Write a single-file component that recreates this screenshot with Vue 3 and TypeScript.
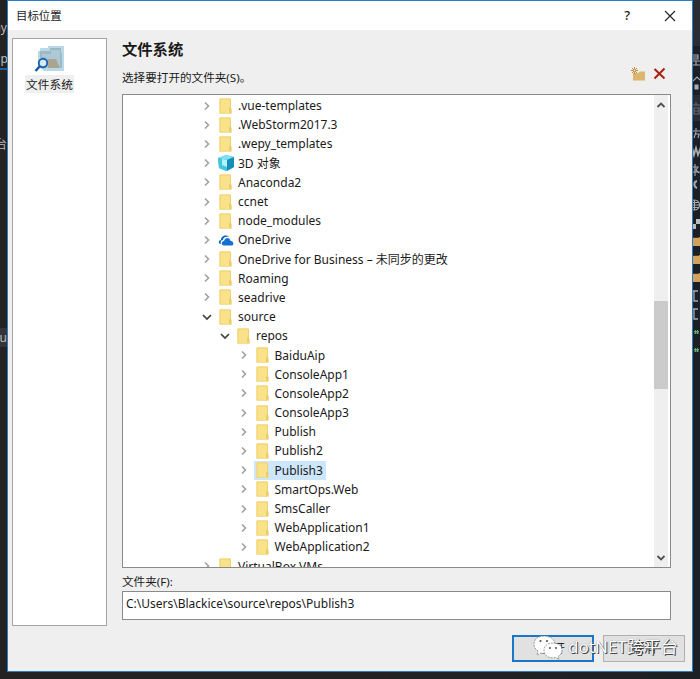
<script setup lang="ts">
interface TreeNode {
  name: string
  level: number
  kind?: 'folder' | 'cube' | 'cloud'
  open?: boolean
  selected?: boolean
}

const nodes: TreeNode[] = [
  { name: '.vue-templates', level: 0 },
  { name: '.WebStorm2017.3', level: 0 },
  { name: '.wepy_templates', level: 0 },
  { name: '3D 对象', level: 0, kind: 'cube' },
  { name: 'Anaconda2', level: 0 },
  { name: 'ccnet', level: 0 },
  { name: 'node_modules', level: 0 },
  { name: 'OneDrive', level: 0, kind: 'cloud' },
  { name: 'OneDrive for Business – 未同步的更改', level: 0 },
  { name: 'Roaming', level: 0 },
  { name: 'seadrive', level: 0 },
  { name: 'source', level: 0, open: true },
  { name: 'repos', level: 1, open: true },
  { name: 'BaiduAip', level: 2 },
  { name: 'ConsoleApp1', level: 2 },
  { name: 'ConsoleApp2', level: 2 },
  { name: 'ConsoleApp3', level: 2 },
  { name: 'Publish', level: 2 },
  { name: 'Publish2', level: 2 },
  { name: 'Publish3', level: 2, selected: true },
  { name: 'SmartOps.Web', level: 2 },
  { name: 'SmsCaller', level: 2 },
  { name: 'WebApplication1', level: 2 },
  { name: 'WebApplication2', level: 2 },
  { name: 'VirtualBox VMs', level: 0 },
]
</script>

<template>
  <div class="desktop">
    <div class="behind left-edge">
      <span class="l1">ny</span>
      <span class="l2">pp</span>
      <span class="l3">台</span>
      <span class="l4">Ou</span>
    </div>
    <div class="behind right-edge">
      <svg width="7" height="679" viewBox="0 0 7 679">
        <path fill="#2a2d31" d="M0 0h7v46H0zM0 95h7v26H0z" />
        <g fill="none" stroke="#a9abad" stroke-width="1.1">
          <path d="M0 55h5v4H0M0 57h5M0 61h7M3 61v4h4M0 65h3" />
          <path d="M0 81l4-4 3 3" />
          <path fill="#a9abad" d="M2 85h3v4H2z" />
          <path stroke="#696c70" d="M0 105h7M3 102v3M1 108h5v6H1zM1 111h5" />
          <path d="M0 131h7M3 128v3M3 132l-2 6M3 134h3l-1 4" />
          <path stroke-width="1.8" d="M-1 147l2 8 2-7 2 7 3-8" />
          <path d="M0 167h5l-2 3 3 3M2 164v12M0 172h7" />
          <path stroke-width="2" d="M4 181c-4 1-3 6 0 7" />
          <circle cx="1.5" cy="205" r="5" />
          <path d="M1.500 200v10M-3 205h9.500M0 202.500h6M0 207.500h6" />
          <path stroke-width="1.300" d="M0 291h5M1 291v10h4M0 309h5M1 309v10h4" />
        </g>
        <path fill="#b9bbbd" d="M3 219h4v5H3zM0 224h3v5H0z" />
        <path fill="#d2a25c" d="M0 237h7v9H0zM0 255h7v9H0zM0 273h7v9H0z" />
        <path stroke="#4a3b26" d="M0 237.500h6M0 255.500h6M0 273.500h6" />
        <path fill="none" stroke="#65a870" d="M2.500 330v4M4.500 330v4M1 331.500h5M1 333h5M2.500 348v4M4.500 348v4M1 349.500h5M1 351h5" />
      </svg>
    </div>

    <section class="dialog">
      <header class="titlebar">
        <span class="caption">目标位置</span>
        <span class="help">?</span>
        <svg class="close" width="12" height="12" viewBox="0 0 12 12">
          <path d="M1 1l10 10M11 1L1 11" stroke="#222" stroke-width="1.100" />
        </svg>
      </header>

      <div class="body">
        <aside class="places">
          <svg class="place-icon" width="32" height="28" viewBox="0 0 32 28">
            <path d="M4 6h2V3h8V1h16v25H10l-6-5z" fill="#b9d9e8" />
            <path d="M6 9V6h10V3h11v5h1v15H11V13H6z" fill="#9fb9c4" />
            <path d="M8 9h9V5h9v18H12V12H8z" fill="#abc9d6" />
            <path d="M13 14h9l4 9H14z" fill="#aaa58e" />
            <circle cx="9" cy="18" r="4.200" fill="#d5ecf7" stroke="#1c65b0" stroke-width="1.900" />
            <path d="M6 21l-4.500 5" stroke="#1c5ca8" stroke-width="2.600" />
          </svg>
          <span class="place-label">文件系统</span>
        </aside>

        <main class="content">
          <h1>文件系统</h1>
          <div class="prompt-row">
            <span class="prompt">选择要打开的文件夹(S)。</span>
            <svg class="new-folder" width="15" height="14" viewBox="0 0 15 14">
              <path d="M2 6h5l2-1.500h5v9H2z" fill="#dcb56f" />
              <path d="M3.500 0v7M0 3.500h7M1 1l5 5M6 1L1 6" stroke="#b58025" stroke-width=".9" />
              <circle cx="3.500" cy="3.500" r="1" fill="#f3dfb8" />
            </svg>
            <svg class="delete" width="13" height="13" viewBox="0 0 13 13">
              <path d="M1.500 2l10 9.500M11.500 1.500l-10 10" stroke="#ab2015" stroke-width="2" />
            </svg>
          </div>

          <div class="tree">
            <ul class="rows">
              <li v-for="n in nodes" :key="n.name" :class="['row', 'level-' + n.level]">
                <svg class="chevron" width="10" height="10" viewBox="0 0 10 10">
                  <path v-if="n.open" d="M1 3l4 4 4-4" stroke="#404040" stroke-width="1.700" fill="none" />
                  <path v-else d="M3 1.500L6.500 5 3 8.500" stroke="#a0a0a0" stroke-width="1.600" fill="none" />
                </svg>
                <span :class="['item', { selected: n.selected }]">
                  <svg v-if="n.kind === 'cube'" class="icon" width="16" height="16" viewBox="0 0 16 16">
                    <path d="M0 3l8-3 8 2v10l-8 4-7-3z" fill="#32bdda" />
                    <path d="M0 3l8-3 8 2-7 3z" fill="#7de1ef" />
                    <path d="M0 3l9 2v11l-8-3z" fill="#43c7df" />
                    <path d="M9 5l7-3v10l-7 4z" fill="#168eb7" />
                    <path d="M4 4l5 1v7l-5-2z" fill="#b5f1f6" />
                  </svg>
                  <svg v-else-if="n.kind === 'cloud'" class="icon" width="16" height="16" viewBox="0 0 16 16">
                    <path d="M3 12C0 12 0 8 3 8c0-4 5-6 8-3-4-1-6 1-6 3-2 0-3 2-2 4z" fill="#0c62bd" />
                    <path d="M6 13.500c-3 0-3-4.500 0-4.500 1-4 6-4 6.500 0 3-.5 4 4.500 1 4.500z" fill="#1372d0" />
                  </svg>
                  <svg v-else class="icon" width="16" height="16" viewBox="0 0 16 16">
                    <path d="M1.500 .5h11v10l1 .5v4.500h-12z" fill="#fae28b" />
                    <path d="M2 15V1h10.500v9.500" fill="none" stroke="#efd06d" />
                    <path d="M11 15v-5l1.500-1 1 2v4.500h-12v-.8z" fill="#ecce68" />
                  </svg>
                  <span class="name">{{ n.name }}</span>
                </span>
              </li>
            </ul>
            <div class="scrollbar">
              <svg width="10" height="8" viewBox="0 0 10 8">
                <path d="M1.500 6L5 2.500 8.500 6" stroke="#505050" stroke-width="1.800" fill="none" />
              </svg>
              <div class="track"><div class="thumb"></div></div>
              <svg width="10" height="8" viewBox="0 0 10 8">
                <path d="M1.500 2L5 5.500 8.500 2" stroke="#505050" stroke-width="1.800" fill="none" />
              </svg>
            </div>
          </div>

          <label class="field-label">文件夹(F):</label>
          <div class="field">C:\Users\Blackice\source\repos\Publish3</div>
        </main>
      </div>

      <footer class="actions">
        <button class="primary">打开</button>
        <button>取消</button>
      </footer>
    </section>

    <div class="watermark">
      <svg width="30" height="25" viewBox="0 0 30 25">
        <g stroke="#777" stroke-width=".7" stroke-dasharray="2 1">
          <path d="M11 1C4 1 1 5 1 9.500c0 3 2 5 4 6.500l-1 4 4-2c8 2 14-2 14-8S17 1 11 1z" fill="#fff" />
          <path d="M20 8c-6 0-9 3-9 7.500S15 23 20 23l3-.5 3 2-1-3c2-1 4-3 4-6C29 11 26 8 20 8z" fill="#fff" />
        </g>
        <g fill="#444">
          <circle cx="7.500" cy="6" r="1" /><circle cx="14" cy="6" r="1" />
          <circle cx="17" cy="13" r=".9" /><circle cx="23" cy="13" r=".9" />
        </g>
      </svg>
      <span>dotNET跨平台</span>
    </div>
  </div>
</template>

<style>
body {
  margin: 0;
  overflow: hidden;
}
</style>

<style scoped>
.desktop {
  position: relative;
  box-sizing: border-box;
  width: 700px;
  height: 679px;
  padding: 0 7px 7px;
  overflow: hidden;
  background: linear-gradient(90deg, #242223, #242223 50%, #1c1f23);
  color: #1a1a1a;
  font: 12px/19px "Noto Sans", "Noto Sans CJK SC", sans-serif;
}
.behind {
  position: absolute;
  top: 0;
  width: 7px;
  height: 679px;
  overflow: hidden;
  color: #bbb;
  font-size: 12px;
}
.left-edge { left: 0; }
.right-edge { right: 0; }
.right-edge svg { display: block; }
.left-edge span {
  position: absolute;
  right: 0;
  white-space: nowrap;
}
.left-edge .l1 { top: 18px; }
.left-edge .l2 { top: 49px; width: 14px; height: 19px; border-bottom: 2px solid #1d629d; }
.left-edge .l3 { top: 135px; }
.left-edge .l4 { top: 328px; background: #34343a; }
.dialog {
  position: relative;
  box-sizing: border-box;
  display: flex;
  flex-direction: column;
  height: 672px;
  border: 1px solid #2b7cc4;
  background: #efefef;
}
.titlebar {
  display: flex;
  align-items: center;
  height: 29px;
  padding: 0 16px 0 8px;
  background: #fff;
}
.caption { flex: 1; font-size: 11.400px; }
.help { margin-right: 34px; font-size: 13px; font-weight: 500; }
.body {
  display: flex;
  gap: 15px;
  padding: 8px 21px 0 4px;
}
.places {
  box-sizing: border-box;
  display: flex;
  flex-direction: column;
  align-items: center;
  width: 95px;
  height: 588px;
  padding: 6px 20px 0 0;
  border: 1px solid #a4a4a4;
  background: #fff;
}
.place-label {
  margin-top: 2px;
  padding: 0 1px;
  background: #efefef;
  font-size: 11.700px;
  line-height: 18px;
}
.content {
  display: flex;
  flex: 1;
  flex-direction: column;
}
h1 {
  margin: 0;
  font-size: 15.300px;
  line-height: 22px;
}
.prompt-row {
  display: flex;
  align-items: center;
  height: 34px;
  padding-right: 5px;
}
.prompt { flex: 1; font-size: 11.600px; }
.new-folder { margin: -6px 7px 0 0; }
.delete { margin-top: -7px; }
.tree {
  box-sizing: border-box;
  display: flex;
  height: 474px;
  border: 1px solid #8a8a8a;
  background: #fff;
  overflow: hidden;
}
.rows {
  flex: 1;
  margin: 0;
  padding: 1px 0 0 79px;
  list-style: none;
}
.row {
  display: flex;
  align-items: center;
  height: 19.200px;
  white-space: nowrap;
}
.level-1 { padding-left: 18px; }
.level-2 { padding-left: 36.500px; }
.chevron { margin-right: 5px; }
.item {
  display: flex;
  align-items: center;
  height: 19px;
  padding: 0 3px 0 1px;
}
.selected { background: #cce6fb; }
.icon { margin-right: 4px; }
.scrollbar {
  display: flex;
  flex-direction: column;
  align-items: center;
  width: 14px;
  margin-right: 2px;
  padding: 6px 0 5px;
  box-sizing: border-box;
  background: #efefef;
}
.track {
  flex: 1;
  width: 14px;
  padding-top: 192px;
  box-sizing: border-box;
}
.thumb { height: 88px; background: #cbcbcb; }
.field-label {
  margin-top: 5px;
  font-size: 11.600px;
  line-height: 18px;
}
.field {
  box-sizing: border-box;
  height: 29px;
  padding: 2px 3px;
  border: 1px solid #8a8a8a;
  background: #fff;
}
.actions {
  display: flex;
  justify-content: flex-end;
  gap: 9px;
  padding: 9px 7px 0 0;
}
button {
  box-sizing: border-box;
  width: 82px;
  height: 27px;
  padding: 0;
  border: 1px solid #b0b0b0;
  background: #e1e1e1;
  color: #222;
  font: inherit;
}
.primary { border: 2px solid #1877c9; }
.watermark {
  position: absolute;
  left: 533px;
  top: 634px;
  display: flex;
  align-items: center;
  gap: 5px;
  color: #fff;
  font-size: 17px;
  line-height: 26px;
  white-space: nowrap;
  text-shadow: 1px 1px 0 #444, 0 0 1px #777;
}
</style>
